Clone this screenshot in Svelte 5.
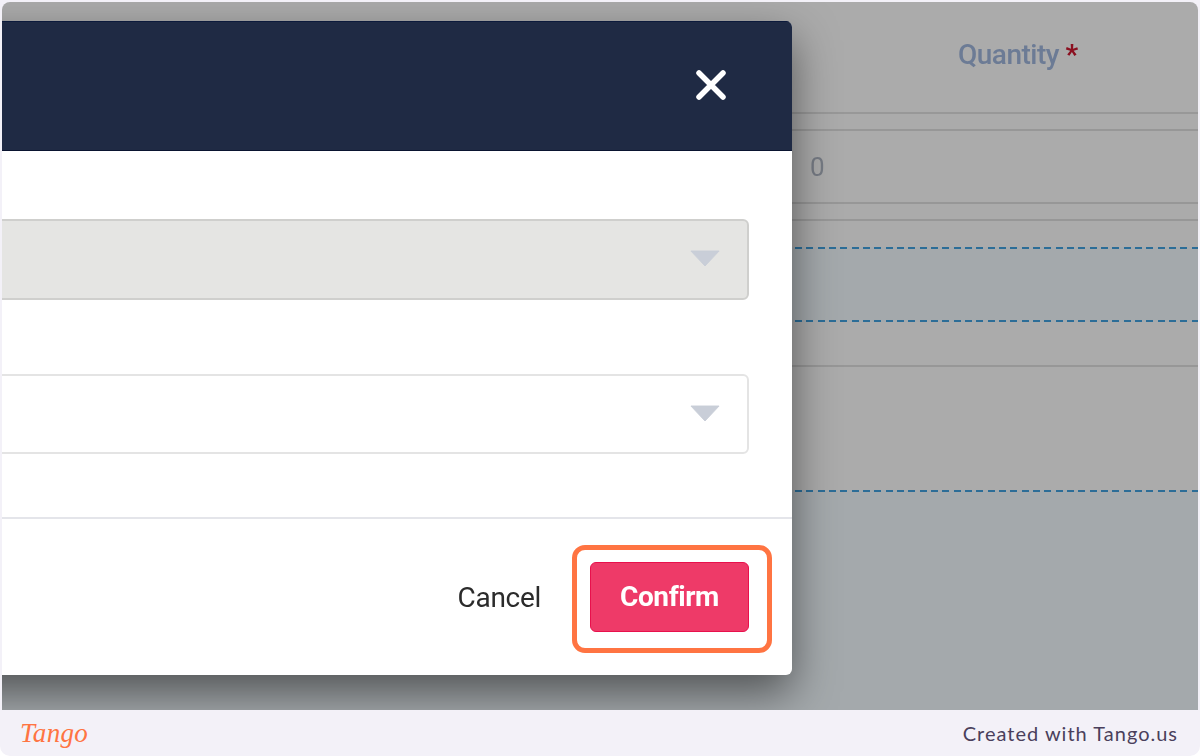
<script>
  let selects = [{ disabled: true }, { disabled: false }];
</script>

<div class="shot">
  <main class="page">
    <section class="table">
      <div class="head">
        <span class="col">Quantity <b>*</b></span>
      </div>
      <div class="gap"></div>
      <div class="row">0</div>
      <div class="gap"></div>
      <div class="plain first"></div>
      <div class="band"></div>
      <div class="plain mid"></div>
      <div class="plain low"></div>
      <div class="band last"></div>
    </section>

    <div class="modal">
      <header>
        <svg width="34" height="34" viewBox="0 0 34 34">
          <path d="M5 5 L29 29 M29 5 L5 29" />
        </svg>
      </header>
      <div class="body">
        {#each selects as s}
          <div class="select" class:disabled={s.disabled}>
            <svg width="30" height="17" viewBox="0 0 32 18">
              <path d="M1 1 H31 L16 17 Z" />
            </svg>
          </div>
        {/each}
      </div>
      <footer>
        <button class="cancel">Cancel</button>
        <span class="focus">
          <button class="confirm">Confirm</button>
        </span>
      </footer>
    </div>
  </main>

  <div class="bar">
    <span class="logo">Tango</span>
    <span class="credit">Created with Tango.us</span>
  </div>
</div>

<style>
  :global(body) {
    background: #fff;
  }

  .shot {
    width: 1200px;
    height: 756px;
    background: #f3f1f8;
    border-radius: 0 0 10px 10px;
    display: flex;
    flex-direction: column;
    padding: 2px 2px 0;
    box-sizing: border-box;
    overflow: hidden;
  }

  .page {
    position: relative;
    height: 708px;
    flex: none;
    overflow: hidden;
    border-radius: 8px 8px 0 0;
    background: #ababab;
    font-family: Roboto, sans-serif;
    filter: blur(0.5px);
  }

  .table {
    display: flex;
    flex-direction: column;
    height: 100%;
  }

  .head {
    height: 112px;
    box-sizing: border-box;
    padding: 35px 0 0 956px;
    border-bottom: 2px solid #989898;
    flex: none;
  }

  .col {
    font-size: 28px;
    line-height: 36px;
    font-weight: 500;
    color: #6c7b95;
    letter-spacing: -0.5px;
  }

  .col b {
    color: #8b1020;
    font-weight: 700;
  }

  .gap {
    height: 15px;
    flex: none;
    border-bottom: 2px solid #979797;
  }

  .row {
    height: 73px;
    flex: none;
    box-sizing: border-box;
    padding: 0 0 0 808px;
    display: flex;
    align-items: center;
    font-size: 26px;
    color: #767b84;
    border-bottom: 2px solid #979797;
  }

  .plain {
    flex: none;
    background: #ababab;
  }

  .plain.first {
    height: 26px;
  }

  .plain.mid {
    height: 43px;
    border-bottom: 2px solid #979797;
  }

  .plain.low {
    height: 123px;
  }

  .band {
    height: 75px;
    flex: none;
    background-color: #a4a9ac;
    background-image:
      repeating-linear-gradient(90deg, #2c6d97 0 7px, transparent 7px 11.33px),
      repeating-linear-gradient(90deg, #2c6d97 0 7px, transparent 7px 11.33px);
    background-size: 100% 2px;
    background-position: 0 0, 0 100%;
    background-repeat: no-repeat;
  }

  .band.last {
    flex: 1;
    background-image: repeating-linear-gradient(90deg, #2c6d97 0 7px, transparent 7px 11.33px);
    background-position: 0 0;
  }

  .modal {
    position: absolute;
    top: 19px;
    left: -110px;
    width: 900px;
    height: 654px;
    display: flex;
    flex-direction: column;
    background: #fff;
    border-radius: 6px;
    overflow: hidden;
    box-shadow: 0 18px 44px rgba(0, 0, 0, 0.5);
  }

  header {
    height: 130px;
    flex: none;
    box-sizing: border-box;
    background: #1f2a44;
    border-top: 1px solid #0c1a3c;
    border-bottom: 1px solid #0a1430;
    display: flex;
    align-items: center;
    justify-content: flex-end;
    padding: 0 64px 2px 0;
  }

  header path {
    fill: none;
    stroke: #fff;
    stroke-width: 5.5;
    stroke-linecap: round;
  }

  .body {
    flex: 1;
    display: flex;
    flex-direction: column;
    gap: 74px;
    padding: 68px 43px 0 0;
    border-bottom: 2px solid #e4e5ea;
  }

  .select {
    height: 80px;
    box-sizing: border-box;
    border: 2px solid #e4e4e4;
    border-radius: 6px;
    background: #fff;
    display: flex;
    align-items: center;
    justify-content: flex-end;
    padding: 0 27px 2px 0;
  }

  .select.disabled {
    height: 81px;
    background: #e5e5e3;
    border-color: #cfcfcd;
  }

  .select path {
    fill: #c9ced8;
    stroke: #c9ced8;
    stroke-linejoin: round;
  }

  footer {
    height: 156px;
    flex: none;
    box-sizing: border-box;
    display: flex;
    align-items: center;
    justify-content: flex-end;
    gap: 31px;
    padding: 0 20px 0 0;
  }

  button {
    border: none;
    background: none;
    padding: 0;
    font-family: Roboto, sans-serif;
    font-size: 28px;
  }

  .cancel {
    color: #2b2b2b;
    letter-spacing: -0.3px;
  }

  .focus {
    width: 200px;
    height: 108px;
    margin-top: 4px;
    box-sizing: border-box;
    border: 5px solid #ff7442;
    border-radius: 13px;
    display: flex;
    align-items: center;
    justify-content: flex-start;
    padding: 0 0 5px 13px;
  }

  .confirm {
    width: 159px;
    height: 70px;
    background: #ee3a68;
    border: 1px solid #e8104c;
    border-radius: 6px;
    color: #fff;
    font-weight: 700;
    letter-spacing: -0.4px;
  }

  .bar {
    flex: 1;
    display: flex;
    align-items: center;
    justify-content: space-between;
    padding: 0 20px 0 18px;
  }

  .logo {
    font-family: "Liberation Serif", serif;
    font-style: italic;
    font-size: 27px;
    line-height: 40px;
    color: #ff7442;
    letter-spacing: 0.3px;
  }

  .credit {
    font-family: Lato, sans-serif;
    font-size: 20px;
    color: #4a3f5c;
    letter-spacing: 1px;
  }
</style>
